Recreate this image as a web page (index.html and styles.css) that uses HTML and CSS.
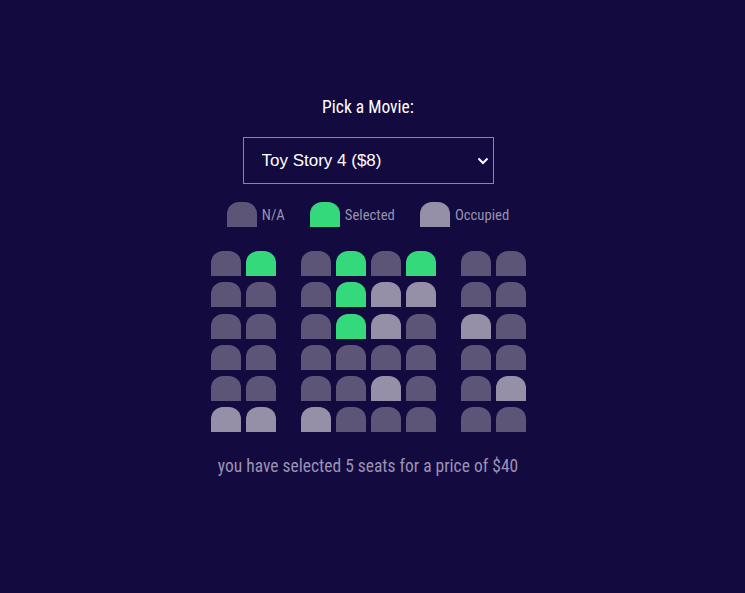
FILE: index.html
```html
<!DOCTYPE html>
<html lang="en">

<head>
  <meta charset="UTF-8">
  <meta name="viewport" content="width=device-width, initial-scale=1.0">
  <title>Movie Seat Booking</title>
  <link rel="stylesheet" href="styles.css">
</head>

<body>
  <div class="movie-container">
    <label for="movie">Pick a Movie:</label>
    <div class="select-wrap">
      <select id="movie">
        <option value="8">Toy Story 4 ($8)</option>
        <option value="10">Avengers: Endgame ($10)</option>
        <option value="12">Joker ($12)</option>
        <option value="9">The Lion King ($9)</option>
      </select>
      <svg class="chevron" width="12" height="8" viewBox="0 0 12 8">
        <path d="M1.5 1.5 L6 6 L10.5 1.5" fill="none" stroke="#fff" stroke-width="2" />
      </svg>
    </div>
  </div>

  <ul class="showcase">
    <li>
      <div class="seat"></div>
      <small>N/A</small>
    </li>
    <li>
      <div class="seat selected"></div>
      <small>Selected</small>
    </li>
    <li>
      <div class="seat occupied"></div>
      <small>Occupied</small>
    </li>
  </ul>

  <div class="seats">
    <div class="row">
      <div class="seat"></div><div class="seat selected"></div>
      <div class="seat"></div><div class="seat selected"></div><div class="seat"></div><div class="seat selected"></div>
      <div class="seat"></div><div class="seat"></div>
    </div>
    <div class="row">
      <div class="seat"></div><div class="seat"></div>
      <div class="seat"></div><div class="seat selected"></div><div class="seat occupied"></div><div class="seat occupied"></div>
      <div class="seat"></div><div class="seat"></div>
    </div>
    <div class="row">
      <div class="seat"></div><div class="seat"></div>
      <div class="seat"></div><div class="seat selected"></div><div class="seat occupied"></div><div class="seat"></div>
      <div class="seat occupied"></div><div class="seat"></div>
    </div>
    <div class="row">
      <div class="seat"></div><div class="seat"></div>
      <div class="seat"></div><div class="seat"></div><div class="seat"></div><div class="seat"></div>
      <div class="seat"></div><div class="seat"></div>
    </div>
    <div class="row">
      <div class="seat"></div><div class="seat"></div>
      <div class="seat"></div><div class="seat"></div><div class="seat occupied"></div><div class="seat"></div>
      <div class="seat"></div><div class="seat occupied"></div>
    </div>
    <div class="row">
      <div class="seat occupied"></div><div class="seat occupied"></div>
      <div class="seat occupied"></div><div class="seat"></div><div class="seat"></div><div class="seat"></div>
      <div class="seat"></div><div class="seat"></div>
    </div>
  </div>

  <p class="text">you have selected <span id="count">5</span> seats for a price of $<span id="total">40</span></p>
</body>

</html>
```

FILE: styles.css
```css
* {
  box-sizing: border-box;
}

body {
  font-family: 'Roboto Condensed', Roboto, sans-serif;
  font-stretch: condensed;
  background-color: #130a3f;
  color: #fff;
  margin: 0;
  padding: 97px 9px 0 0;
  display: flex;
  flex-direction: column;
  align-items: center;
  min-height: 100vh;
}

.movie-container {
  display: flex;
  flex-direction: column;
  align-items: center;
}

.movie-container label {
  font-size: 17.5px;
  line-height: 21px;
  margin-bottom: 19px;
}

.select-wrap {
  position: relative;
}

.movie-container select {
  appearance: none;
  -webkit-appearance: none;
  background-color: #130a3f;
  color: #fff;
  border: 1px solid #8c869c;
  border-radius: 0;
  font-family: 'Liberation Sans', Arial, sans-serif;
  font-size: 17px;
  width: 251px;
  height: 47px;
  padding: 0 18px;
  outline: none;
}

.chevron {
  position: absolute;
  right: 5px;
  top: 20px;
  pointer-events: none;
}

.seat {
  background-color: #5c5577;
  width: 30px;
  height: 25px;
  border-top-left-radius: 12px;
  border-top-right-radius: 12px;
}

.seat.selected {
  background-color: #33d97b;
}

.seat.occupied {
  background-color: #968fa8;
}

.showcase {
  list-style: none;
  display: flex;
  gap: 25px;
  margin: 18px 0 0;
  padding: 0;
}

.showcase li {
  display: flex;
  align-items: center;
  gap: 5px;
}

.showcase small {
  font-size: 14.7px;
  color: #9891b0;
}

.seats {
  margin-top: 24px;
  display: flex;
  flex-direction: column;
  gap: 6.25px;
}

.row {
  display: flex;
  gap: 5px;
}

.row .seat:nth-of-type(2) {
  margin-right: 20px;
}

.row .seat:nth-last-of-type(2) {
  margin-left: 20px;
}

.text {
  margin: 24px 0 0;
  font-size: 17.5px;
  line-height: 21px;
  color: #9b93b5;
}
```
